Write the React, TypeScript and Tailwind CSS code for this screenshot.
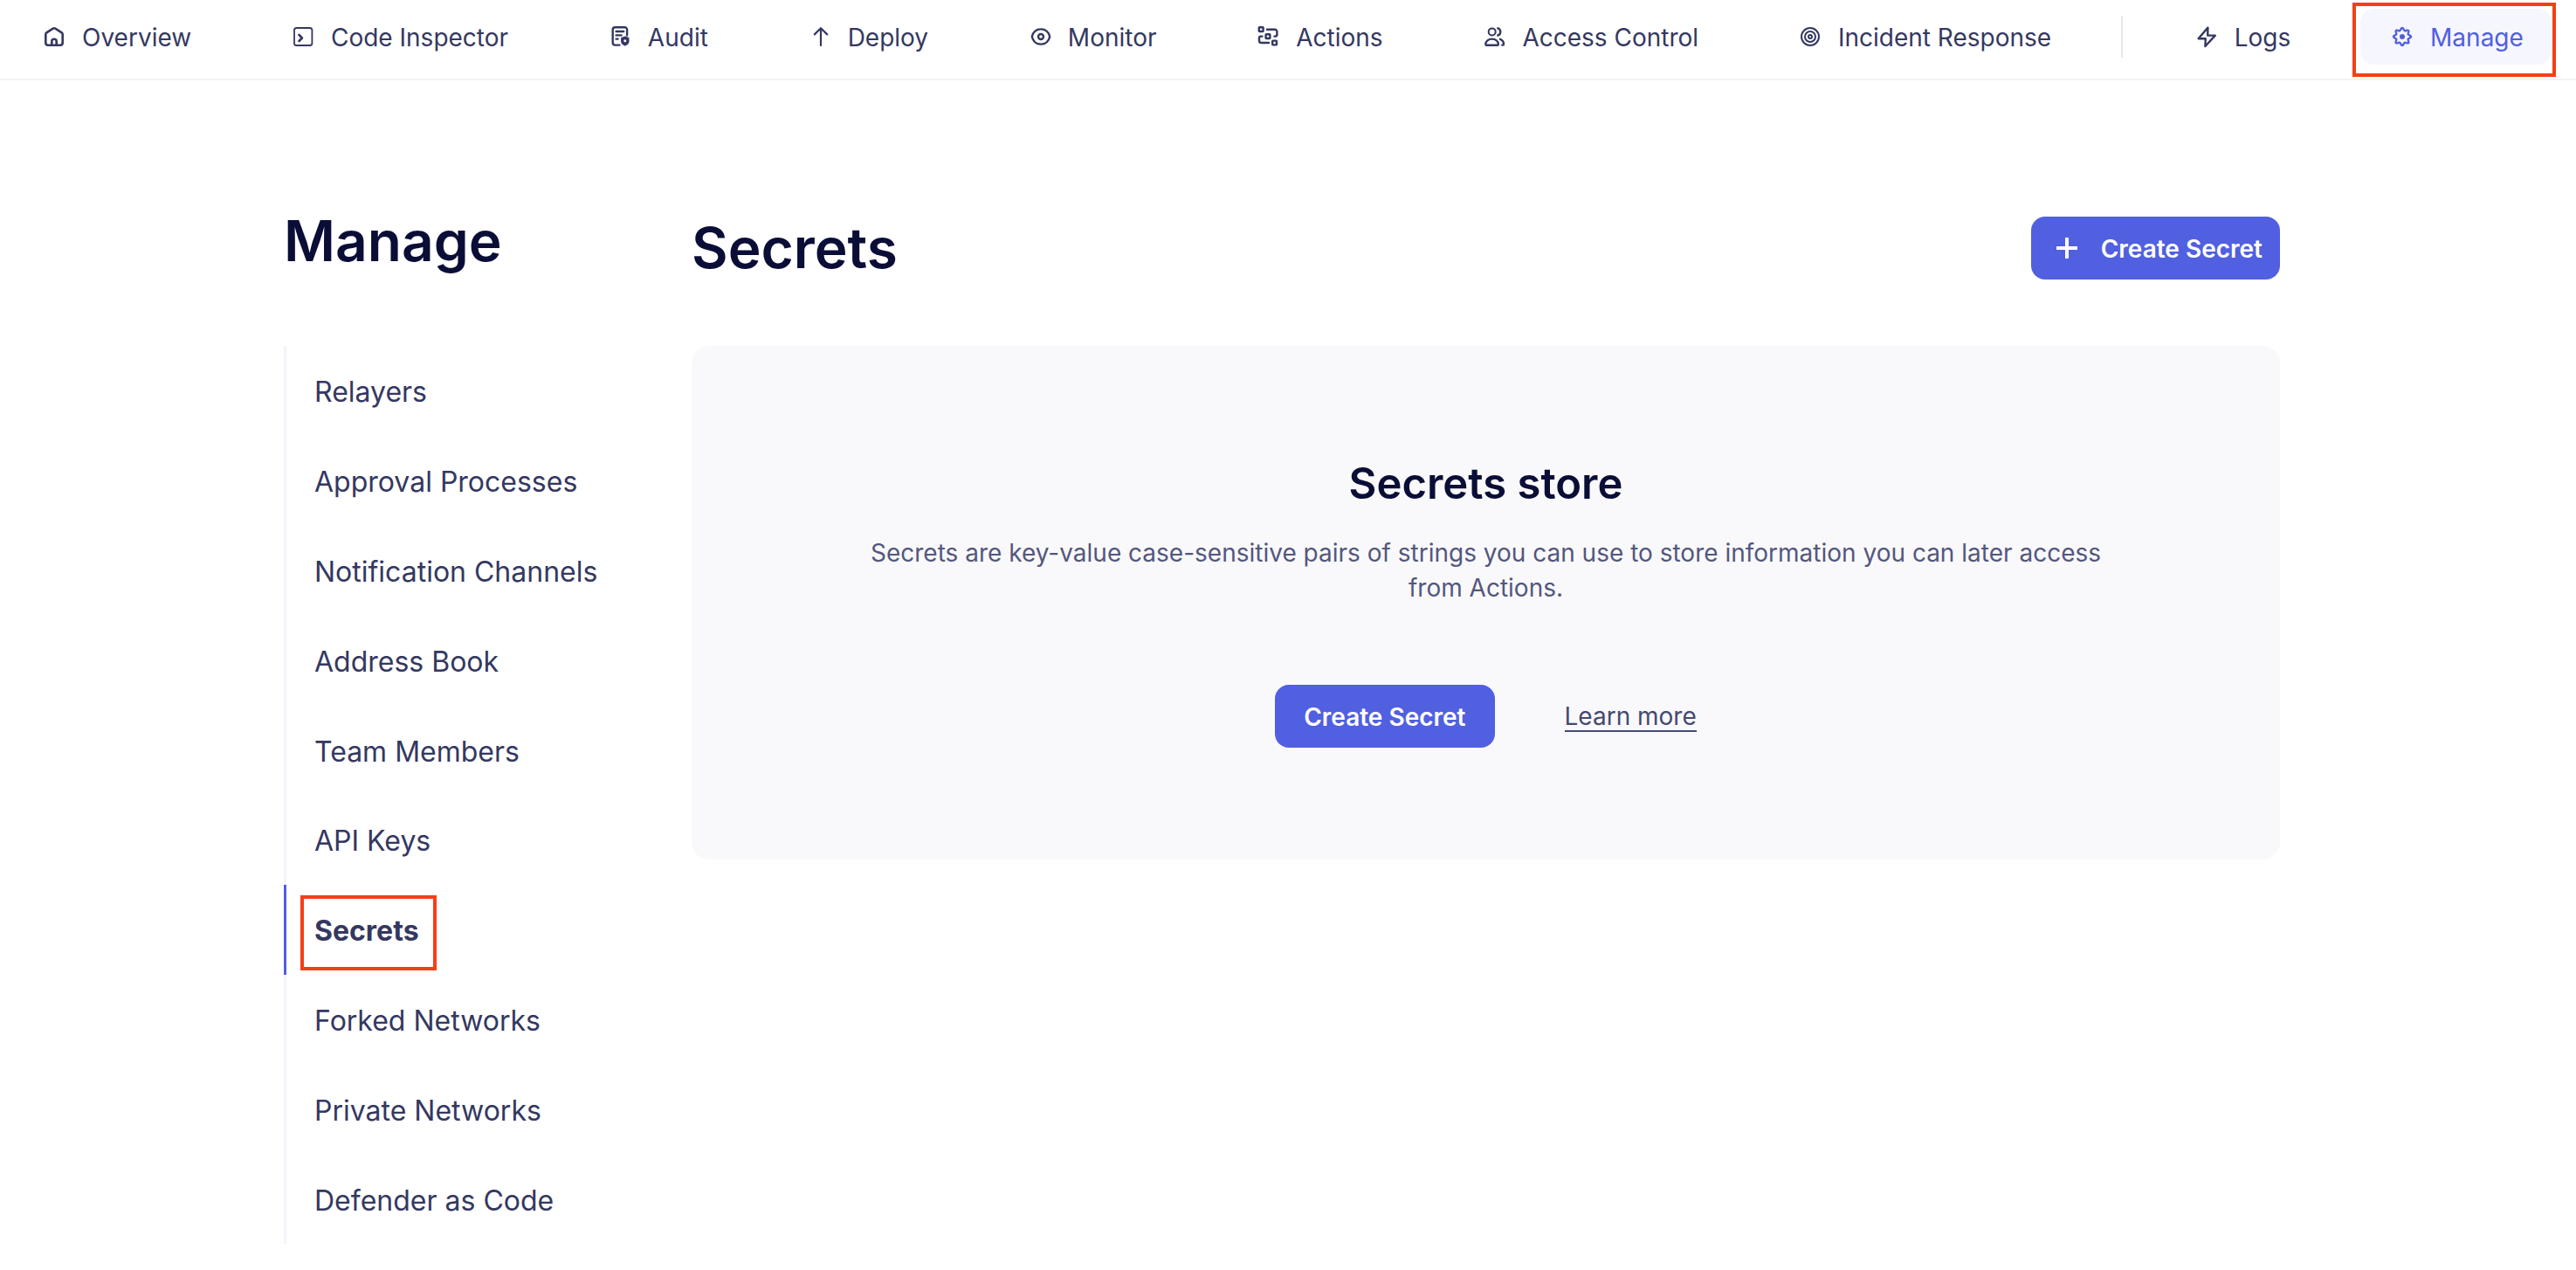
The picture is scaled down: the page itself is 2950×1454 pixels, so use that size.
import type { ReactNode } from "react";

const icon = (children: ReactNode, width = 2.4) => (
  <svg
    viewBox="0 0 32 32"
    className="size-8 shrink-0"
    fill="none"
    stroke="currentColor"
    strokeWidth={width}
    strokeLinecap="round"
    strokeLinejoin="round"
    aria-hidden="true"
  >
    {children}
  </svg>
);

// Closed wave around (16, 16): eight rounded teeth with eight rounded gaps.
const gearPath = (() => {
  const point = (radius: number, degrees: number) => {
    const a = (degrees * Math.PI) / 180;
    return `${(16 + radius * Math.sin(a)).toFixed(2)} ${(16 - radius * Math.cos(a)).toFixed(2)}`;
  };
  let d = `M${point(8.6, -11.25)}`;
  for (let i = 0; i < 16; i++) {
    const toothOrGap = i % 2 === 0 ? 11.6 : 6.2;
    d += `Q${point(toothOrGap, i * 22.5)} ${point(8.6, i * 22.5 + 11.25)}`;
  }
  return d + "z";
})();

const navItems = [
  {
    label: "Overview",
    icon: icon(
      <>
        <path d="M6.3 13.400a2.600 2.600 0 0 1 1.100-2.100l7.300-4.600a2.500 2.500 0 0 1 2.600 0l7.300 4.600a2.600 2.600 0 0 1 1.100 2.100v9.700a2.600 2.600 0 0 1-2.600 2.600H8.900a2.600 2.600 0 0 1-2.600-2.600z" />
        <path d="M13.300 25.500v-4a2.700 2.700 0 0 1 5.400 0v4" />
      </>,
      2.6,
    ),
  },
  {
    label: "Code Inspector",
    icon: icon(
      <>
        <rect x="6" y="6" width="20.400" height="20" rx="2.600" strokeWidth="1.800" />
        <path d="m11.500 14 3.400 3.500-3.400 3.500" strokeWidth="2.600" />
      </>,
    ),
  },
  {
    label: "Audit",
    icon: icon(
      <>
        <path d="M15.500 25.600h-5A2.800 2.800 0 0 1 7.700 22.800V8A2.800 2.800 0 0 1 10.500 5.200h10.800A2.800 2.800 0 0 1 24.100 8v6.500" />
        <path d="M11.600 10h8.600M11.600 14.400h6M11.600 18.600h2" />
        <path
          d="M21.800 16.200 25.800 17.600v3.600c0 2.200-1.700 3.700-4 4.600-2.300-.9-4-2.400-4-4.600v-3.600z"
          fill="currentColor"
          strokeWidth="1.400"
        />
        <circle cx="21.800" cy="20.800" r="1.500" fill="#fff" stroke="none" />
      </>,
    ),
  },
  { label: "Deploy", icon: icon(<path d="M17 26V6.300M9.800 13.400 17 6.200l7.200 7.200" />, 2.200) },
  {
    label: "Monitor",
    icon: icon(
      <>
        <path d="M6.800 16C8.200 10.300 12.200 7.400 17 7.400S25.800 10.300 27.200 16C25.800 21.700 21.800 24.600 17 24.600S8.200 21.700 6.800 16z" />
        <circle cx="17" cy="16" r="3" />
      </>,
    ),
  },
  {
    label: "Actions",
    icon: icon(
      <>
        <rect x="5.800" y="5.200" width="4.800" height="4.800" rx=".6" />
        <rect x="13.600" y="13.200" width="4.800" height="4.800" rx=".6" />
        <rect x="21.200" y="20.600" width="4.800" height="4.800" rx=".6" />
        <path d="M15 7.800h9a2.400 2.400 0 0 1 2.400 2.400v3.400a2 2 0 0 1-2 2h-1" />
        <path d="M9.500 15.600H8a2 2 0 0 0-2 2v3a2.400 2.400 0 0 0 2.400 2.400H17" />
      </>,
    ),
  },
  {
    label: "Access Control",
    icon: icon(
      <>
        <circle cx="13.700" cy="10.400" r="4" strokeWidth="2" />
        <path d="M7 25.700c-.6 0-.7-.6-.7-1.200 0-3.300 3.200-5.900 7.300-5.900s7.300 2.600 7.300 5.900c0 .6-.1 1.200-.7 1.200z" />
        <path d="M20.300 6.300a4.300 4.300 0 0 1 0 8.200M23 18.800c2.400 1 4 3.200 4 5.600 0 .6-.3 1.200-1 1.200h-.8" />
      </>,
    ),
  },
  {
    label: "Incident Response",
    icon: icon(
      <>
        <circle cx="16" cy="16" r="10" />
        <circle cx="16" cy="16" r="6" />
        <circle cx="16" cy="16" r="2" />
      </>,
      2,
    ),
  },
];

const logsIcon = icon(<path d="M17.400 5.600 6.600 18.200h8.200L14.400 27 25.800 14.600H17.200z" />);

const gearIcon = icon(
  <>
    <path d={gearPath} />
    <circle cx="16" cy="16" r="3" fill="currentColor" stroke="none" />
  </>,
);

const sideItems = [
  "Relayers",
  "Approval Processes",
  "Notification Channels",
  "Address Book",
  "Team Members",
  "API Keys",
  "Secrets",
  "Forked Networks",
  "Private Networks",
  "Defender as Code",
];

function NavLink({ label, children, active = false }: { label: string; children: ReactNode; active?: boolean }) {
  return (
    <a
      href="#"
      aria-current={active ? "page" : undefined}
      className={
        active
          ? "relative flex h-16 items-center gap-4 rounded-2xl bg-[#f6f6fe] px-8 whitespace-nowrap text-[#4f5fe1]"
          : "flex h-16 items-center gap-4 px-8 whitespace-nowrap"
      }
    >
      {children}
      <span className="pt-0.5">{label}</span>
      {active && <span className="absolute -top-[7px] -right-[5px] -bottom-[14px] -left-[9px] border-4 border-[#f43f16]" />}
    </a>
  );
}

export default function App() {
  return (
    <div className="min-h-screen bg-white font-['Inter',sans-serif] text-[28px] text-[#343861]">
      <header className="flex items-start justify-between border-b-2 border-[#f3f3f8] pt-[10px] pr-7 pb-4 pl-[14px]">
        {navItems.map((item) => (
          <NavLink key={item.label} label={item.label}>
            {item.icon}
          </NavLink>
        ))}
        <span className="mt-2 h-12 w-0.5 bg-[#e6e7ed]" />
        <NavLink label="Logs">{logsIcon}</NavLink>
        <NavLink label="Manage" active>
          {gearIcon}
        </NavLink>
      </header>

      <div className="flex pt-[156px] pr-[339px] pl-[325px]">
        <aside className="w-[467px] shrink-0">
          <h1 className="h-[148px] text-[64px] leading-[56px] font-semibold text-[#0a0e37]">Manage</h1>
          <nav className="grid h-[1028px] grid-rows-10 text-[32px]">
            {sideItems.map((label) => {
              const active = label === "Secrets";
              return (
                <a
                  key={label}
                  href="#"
                  aria-current={active ? "page" : undefined}
                  className={
                    active
                      ? "relative flex items-center border-l-[3px] border-[#4f5fe1] pt-1 pl-8 font-bold"
                      : "flex items-center border-l-[3px] border-[#f3f3f8] pt-1 pl-8"
                  }
                >
                  {label}
                  {active && (
                    <span className="absolute top-3 bottom-[5px] left-4 w-[156px] border-4 border-[#f43f16]" />
                  )}
                </a>
              );
            })}
          </nav>
        </aside>

        <main className="min-w-0 flex-1">
          <div className="flex h-[148px] items-start justify-between">
            <h2 className="text-[64px] leading-[72px] font-semibold text-[#0a0e37]">Secrets</h2>
            <button
              type="button"
              className="flex h-[72px] items-center gap-[22px] rounded-2xl bg-[#515fe1] pr-5 pl-[26px] font-semibold text-white"
            >
              {icon(<path d="M15 4v24M3 16h24" strokeLinecap="butt" />, 4)}
              <span className="pt-0.5">Create Secret</span>
            </button>
          </div>
          <section className="flex h-[588px] flex-col items-center rounded-[20px] bg-[#f9f9fc] px-[200px] pt-[122px] text-center">
            <h3 className="text-[49px] leading-[72px] font-semibold text-[#0a0e37]">Secrets store</h3>
            <p className="mt-[23px] leading-10 text-[#53577d]">
              Secrets are key-value case-sensitive pairs of strings you can use to store information you can later access
              from Actions.
            </p>
            <div className="mt-[91px] flex items-center gap-20">
              <button type="button" className="h-[72px] rounded-2xl bg-[#515fe1] px-[33px] pt-0.5 font-semibold text-white">
                Create Secret
              </button>
              <a href="#" className="border-b-2 border-[#45496f] pt-0.5 leading-8 text-[#45496f]">
                Learn more
              </a>
            </div>
          </section>
        </main>
      </div>
    </div>
  );
}
